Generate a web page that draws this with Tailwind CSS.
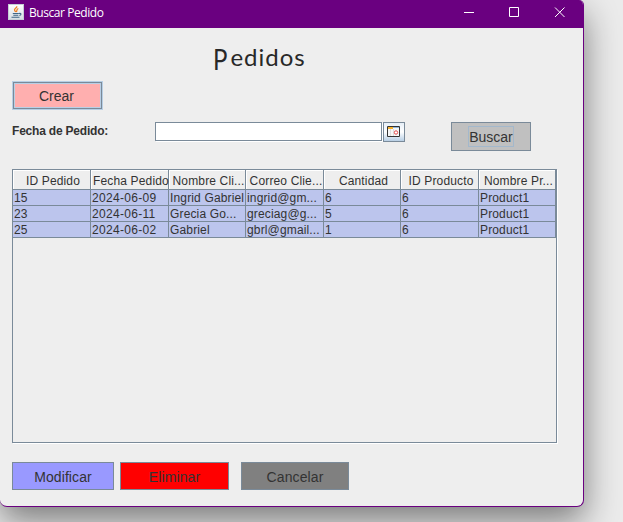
<!DOCTYPE html>
<html lang="es">
<head>
<meta charset="utf-8">
<title>Buscar Pedido</title>
<script src="https://cdn.jsdelivr.net/npm/@tailwindcss/browser@4"></script>
</head>
<body class="w-[623px] h-[522px] overflow-hidden bg-[#ebebeb] font-['Liberation_Sans',Arial,sans-serif] text-[#333]">
<main class="w-[584px] h-[507px] flex flex-col overflow-hidden bg-[#eee] border-r border-b border-[#6a0080] rounded-tr-[5px] rounded-b-[7px] shadow-[0_14px_34px_rgba(0,0,0,0.48)]">
  <header class="h-7 shrink-0 flex items-start bg-[#6a0080] text-white">
    <svg class="ml-2 mt-1 shrink-0" width="16" height="16" viewBox="0 0 16 16" fill="none">
      <defs><linearGradient id="g" x2="0" y2="1"><stop stop-color="#fff"/><stop offset="1" stop-color="#d4dde3"/></linearGradient></defs>
      <rect x=".5" y=".5" width="15" height="15" fill="url(#g)" stroke="#c5ced5"/>
      <path d="M8.700 2.200C9.500 4 5.600 4.700 6.600 6.300L7.700 8M10.300 4.500C8 5.400 9.500 6.300 8.300 8" stroke="#ee8120" stroke-width="1.300"/>
      <path d="M4.800 9.500h6M5.300 11.300h5M3.500 13.200h8M11 9.500c2.700-.8 2.500 1.600.4 2" stroke="#3f6685" stroke-width="1.100"/>
    </svg>
    <h1 class="ml-[5px] mt-[5px] text-[12px] leading-4 font-['Open_Sans','Noto_Sans',sans-serif] tracking-[-0.440px] whitespace-nowrap">Buscar Pedido</h1>
    <svg class="ml-auto mr-[17px] mt-[7px]" width="102" height="11" viewBox="0 0 102 11" fill="none" stroke="#fff">
      <path d="M0 5.500h10M45.500 .5h9v9h-9z"/>
      <path d="M91 .5l9.500 9.500M100.500 .5L91 10"/>
    </svg>
  </header>
  <section class="px-3 flex flex-col">
    <h2 class="h-[54px] pl-[201px] pt-[13px] text-[24px] leading-[32px] font-['Lato',sans-serif] tracking-[1px] text-[#282828] whitespace-nowrap"><span class="inline-block origin-bottom scale-y-[1.200] translate-y-[5px] tracking-[3px]">P</span>edidos</h2>
    <button class="ml-px w-[89px] h-[27px] pr-[2px] border border-[#7a8a99] shadow-[inset_0_0_0_1px_#b8cfe5,0_0_0_1px_#b8cfe5] bg-[#ffafaf] text-[14px] leading-[27px]">Crear</button>
    <div class="mt-[12px] h-[31px] flex items-start">
      <label class="w-[143px] pt-[3px] text-[12px] leading-[14px] font-bold tracking-[-0.200px] whitespace-nowrap">Fecha de Pedido:</label>
      <input class="mt-px w-[227px] h-[19px] bg-white border border-[#7a8a99] shadow-[1px_1px_0_#fff]" aria-label="Fecha de Pedido">
      <button class="ml-px mt-px w-[22px] h-[20px] flex items-center justify-center border border-[#7a8a99] bg-linear-to-b from-[#e7eff7] via-white to-[#b8cfe5]" aria-label="Calendario">
        <svg width="14" height="12" viewBox="0 0 14 12" fill="none">
          <path fill="#f7f7f7" d="M1 1h12v10H1z"/><path fill="#f5b130" d="M1 1h5v2H1z"/><path fill="#8fb7dc" d="M6 1h6v1H6z"/>
          <path stroke="#ddd" d="M3.500 3v7M6.500 3v7"/><path stroke="#333" d="M.5.500h12v10H.5z"/><circle cx="9" cy="6.500" r="1.700" fill="#fff" stroke="#e44b4b"/>
        </svg>
      </button>
      <button class="ml-[46px] mt-px w-20 h-[29px] flex items-center justify-center bg-[#c0c0c0] border border-[#7a8a99] text-[14px]"><span class="w-[46px] h-[21px] border border-[#a3b8cc] leading-[20px] text-center flex justify-center">Buscar</span></button>
    </div>
    <div class="mt-[17px] w-[545px] h-[274px] border border-[#7a8a99] shadow-[1px_1px_0_#fff]">
      <table class="table-fixed w-[543px] border-separate border-spacing-0 text-[12px] leading-[14px] whitespace-nowrap">
        <colgroup><col class="w-[78px]"><col class="w-[78px]"><col class="w-[77px]"><col class="w-[78px]"><col class="w-[77px]"><col class="w-[78px]"><col class="w-[77px]"></colgroup>
        <thead>
          <tr class="h-5 tracking-[0.150px] [&>th]:p-0 [&>th]:pt-[3px] [&>th]:pl-[3px] [&>th]:font-normal [&>th]:shadow-[inset_1px_1px_0_#fff] [&>th]:border-r [&>th]:border-b [&>th]:border-[#7a8a99]">
            <th>ID Pedido</th><th><div class="-ml-[3px] pl-[2px] text-left">Fecha Pedido</div></th><th>Nombre Cli...</th><th>Correo Clie...</th><th>Cantidad</th><th>ID Producto</th><th>Nombre Pr...</th>
          </tr>
        </thead>
        <tbody class="bg-[#bcc5ed] tracking-[0.150px] [&>tr]:h-4 [&_td]:p-0 [&_td]:pl-px [&_td]:pt-px [&_td]:border-r [&_td]:border-b [&_td]:border-[#7a8a99]">
          <tr><td>15</td><td class="tracking-[0.300px]">2024-06-09</td><td>Ingrid Gabriel</td><td>ingrid@gm...</td><td>6</td><td>6</td><td>Product1</td></tr>
          <tr><td>23</td><td class="tracking-[0.300px]">2024-06-11</td><td>Grecia Go...</td><td>greciag@g...</td><td>5</td><td>6</td><td>Product1</td></tr>
          <tr><td>25</td><td class="tracking-[0.300px]">2024-06-02</td><td>Gabriel</td><td>gbrl@gmail...</td><td>1</td><td>6</td><td>Product1</td></tr>
        </tbody>
      </table>
    </div>
    <div class="mt-[19px] flex text-[14px] leading-[28px] tracking-[0.100px] [&>button]:h-7 [&>button]:border [&>button]:border-[#7a8a99]">
      <button class="w-[102px] bg-[#9999ff]">Modificar</button>
      <button class="ml-[6px] w-[109px] bg-[#ff0000]">Eliminar</button>
      <button class="ml-3 w-[108px] bg-[#808080]">Cancelar</button>
    </div>
  </section>
</main>
</body>
</html>
